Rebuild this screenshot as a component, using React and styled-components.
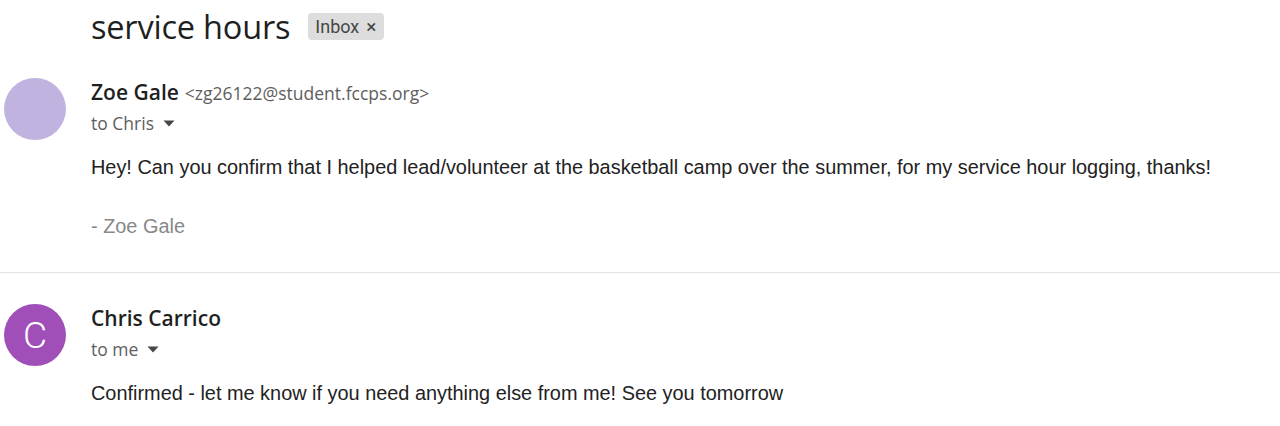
import React from "react";
import styled, { createGlobalStyle } from "styled-components";

const GlobalStyle = createGlobalStyle`
    html, body {
        margin: 0;
        padding: 0;
        background: #ffffff;
    }
    body {
        font-family: "Open Sans", Roboto, "Liberation Sans", Arial, sans-serif;
        color: #1f1f1f;
    }
`;

const messages = [
    {
        id: 1,
        name: "Zoe Gale",
        email: "<zg26122@student.fccps.org>",
        to: "to Chris",
        avatarColor: "#c1b3df",
        initial: "",
        body: "Hey! Can you confirm that I helped lead/volunteer at the basketball camp over the summer, for my service hour logging, thanks!",
        signature: "- Zoe Gale",
    },
    {
        id: 2,
        name: "Chris Carrico",
        email: "",
        to: "to me",
        avatarColor: "#a04fb9",
        initial: "C",
        body: "Confirmed - let me know if you need anything else from me! See you tomorrow",
        signature: "",
    },
];

const Caret = () => (
    <svg width="12" height="7" viewBox="0 0 12 7" aria-hidden="true">
        <path d="M0.5 0.5 L11.5 0.5 L6 6.5 Z" fill="#444746" />
    </svg>
);

const Message = ({ msg, last }) => (
    <StyledMessage $last={last}>
        <Avatar $color={msg.avatarColor}>{msg.initial}</Avatar>
        <MessageContent>
            <SenderLine>
                <SenderName>{msg.name}</SenderName>
                {msg.email ? <SenderEmail>{msg.email}</SenderEmail> : null}
            </SenderLine>
            <Recipients>
                {msg.to}
                <Caret />
            </Recipients>
            <Body>{msg.body}</Body>
            {msg.signature ? <Signature>{msg.signature}</Signature> : null}
        </MessageContent>
    </StyledMessage>
);

const App = () => {
    return (
        <Page>
            <GlobalStyle />
            <SubjectRow>
                <Subject>service hours</Subject>
                <Label>
                    Inbox <LabelClose>×</LabelClose>
                </Label>
            </SubjectRow>
            {messages.map((msg, index) => (
                <Message key={msg.id} msg={msg} last={index === messages.length - 1} />
            ))}
        </Page>
    );
};

const Page = styled.div`
    width: 1280px;
    height: 426px;
    overflow: hidden;
    background: #ffffff;
`;

const SubjectRow = styled.div`
    display: flex;
    align-items: center;
    gap: 18px;
    padding: 5px 0 0 91px;
    height: 42px;
`;

const Subject = styled.h1`
    margin: 0;
    font-family: "Open Sans", Roboto, sans-serif;
    font-weight: 400;
    font-size: 32.5px;
    letter-spacing: -0.2px;
    color: #1f1f1f;
`;

const Label = styled.span`
    display: inline-flex;
    align-items: center;
    gap: 7px;
    height: 27px;
    padding: 0 8px 0 7px;
    border-radius: 4px;
    background: #dddddd;
    font-family: Roboto, sans-serif;
    font-size: 18px;
    color: #444746;
`;

const LabelClose = styled.span`
    font-size: 19px;
    line-height: 1;
    color: #444746;
`;

const StyledMessage = styled.div`
    display: flex;
    align-items: flex-start;
    padding: ${props => (props.$last ? "31px 0 0 4px" : "31px 0 34px 4px")};
    border-bottom: ${props => (props.$last ? "none" : "1px solid #e3e3e3")};
`;

const Avatar = styled.div`
    flex: none;
    width: 62px;
    height: 62px;
    border-radius: 50%;
    background: ${props => props.$color};
    color: #ffffff;
    display: flex;
    align-items: center;
    justify-content: center;
    font-family: Roboto, sans-serif;
    font-weight: 300;
    font-size: 37px;
    margin-right: 25px;
`;

const MessageContent = styled.div`
    display: flex;
    flex-direction: column;
`;

const SenderLine = styled.div`
    display: flex;
    align-items: baseline;
    gap: 6px;
    height: 28px;
`;

const SenderName = styled.span`
    font-family: "Open Sans", sans-serif;
    font-weight: 600;
    font-size: 21px;
    color: #1f1f1f;
`;

const SenderEmail = styled.span`
    font-family: "Open Sans", sans-serif;
    font-size: 17.5px;
    color: #5e5e5e;
`;

const Recipients = styled.div`
    display: flex;
    align-items: center;
    gap: 9px;
    height: 28px;
    margin-top: 3px;
    font-family: "Open Sans", sans-serif;
    font-size: 17.5px;
    color: #5e5e5e;
`;

const Body = styled.p`
    margin: 18px 0 0;
    font-family: "Liberation Sans", Arial, sans-serif;
    font-size: 19.9px;
    line-height: 24px;
    color: #222222;
`;

const Signature = styled.p`
    margin: 35px 0 0;
    font-family: "Liberation Sans", Arial, sans-serif;
    font-size: 19.9px;
    line-height: 24px;
    color: #888888;
`;

export default App;
